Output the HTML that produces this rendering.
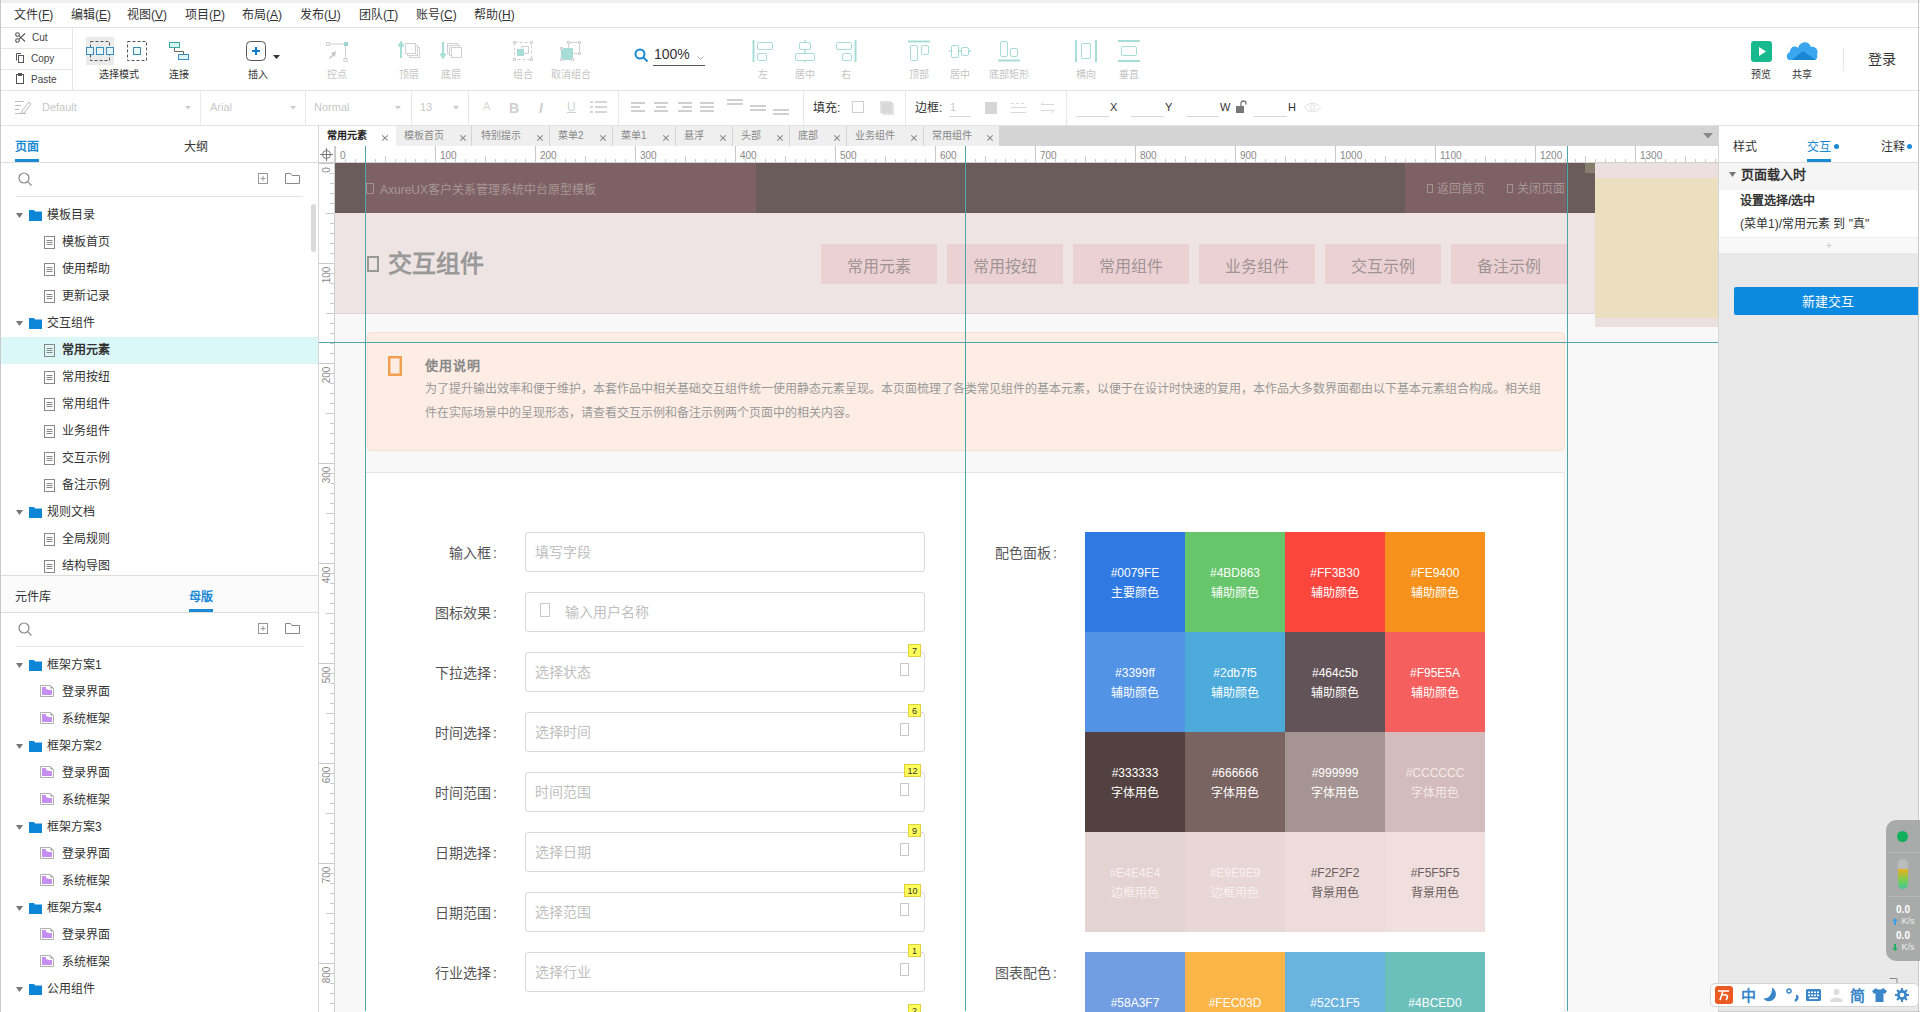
<!DOCTYPE html>
<html lang="zh-CN"><head><meta charset="utf-8"><title>Axure</title>
<style>
html,body{margin:0;padding:0;}
body{width:1920px;height:1012px;overflow:hidden;position:relative;background:#fff;font-family:"Liberation Sans",sans-serif;}
.a{position:absolute;}
.t{position:absolute;white-space:nowrap;}
svg.a{overflow:visible;}
</style></head><body>

<div class="a" style="left:0px;top:0px;width:1920px;height:3px;background:#efefef"></div>
<div class="a" style="left:0px;top:27px;width:1920px;height:1px;background:#e2e2e2"></div>
<div class="a" style="left:0px;top:90px;width:1920px;height:1px;background:#e2e2e2"></div>
<div class="a" style="left:0px;top:125px;width:1920px;height:1px;background:#e2e2e2"></div>
<div class="a" style="left:0px;top:0px;width:1px;height:1012px;background:#c9c9c9"></div>
<div class="a" style="left:1918px;top:0px;width:1px;height:1012px;background:#c9c9c9"></div>
<div class="a" style="left:0px;top:1011px;width:1920px;height:1px;background:#c9c9c9"></div>
<div class="t" style="left:14px;top:9.0px;font-size:12px;line-height:12px;color:#333;">文件(<u>F</u>)</div>
<div class="t" style="left:71px;top:9.0px;font-size:12px;line-height:12px;color:#333;">编辑(<u>E</u>)</div>
<div class="t" style="left:127px;top:9.0px;font-size:12px;line-height:12px;color:#333;">视图(<u>V</u>)</div>
<div class="t" style="left:185px;top:9.0px;font-size:12px;line-height:12px;color:#333;">项目(<u>P</u>)</div>
<div class="t" style="left:242px;top:9.0px;font-size:12px;line-height:12px;color:#333;">布局(<u>A</u>)</div>
<div class="t" style="left:300px;top:9.0px;font-size:12px;line-height:12px;color:#333;">发布(<u>U</u>)</div>
<div class="t" style="left:359px;top:9.0px;font-size:12px;line-height:12px;color:#333;">团队(<u>T</u>)</div>
<div class="t" style="left:416px;top:9.0px;font-size:12px;line-height:12px;color:#333;">账号(<u>C</u>)</div>
<div class="t" style="left:474px;top:9.0px;font-size:12px;line-height:12px;color:#333;">帮助(<u>H</u>)</div>
<div class="a" style="left:1px;top:48px;width:71px;height:1px;background:#e6e6e6"></div>
<div class="a" style="left:1px;top:69px;width:71px;height:1px;background:#e6e6e6"></div>
<div class="a" style="left:72px;top:28px;width:1px;height:62px;background:#e6e6e6"></div>
<div class="t" style="left:32px;top:32.5px;font-size:10px;line-height:10px;color:#444;">Cut</div>
<div class="t" style="left:31px;top:53.5px;font-size:10px;line-height:10px;color:#444;">Copy</div>
<div class="t" style="left:31px;top:74.5px;font-size:10px;line-height:10px;color:#444;">Paste</div>
<svg class="a" style="left:15px;top:32px;" width="11" height="11" viewBox="0 0 11 11"><g fill="none" stroke="#555" stroke-width="1.1"><circle cx="2.5" cy="2.5" r="1.8"/><circle cx="2.5" cy="8.5" r="1.8"/><path d="M4 3.8 L10 9.5 M4 7.2 L10 1.5"/></g></svg>
<svg class="a" style="left:16px;top:53px;" width="8" height="10" viewBox="0 0 8 10"><g fill="none" stroke="#555" stroke-width="1"><path d="M0.5 7.5 V0.5 H5"/><rect x="2.5" y="2.5" width="5" height="7"/></g></svg>
<svg class="a" style="left:16px;top:73px;" width="9" height="11" viewBox="0 0 9 11"><g fill="none" stroke="#555" stroke-width="1"><rect x="0.5" y="1.5" width="7" height="9"/><rect x="2.5" y="0.5" width="3" height="2" fill="#555"/></g></svg>
<div class="a" style="left:86px;top:37px;width:28px;height:28px;background:#ebebeb"></div>
<svg class="a" style="left:86px;top:37px;" width="28" height="28" viewBox="0 0 28 28"><g fill="none"><rect x="4.5" y="4.5" width="19" height="19" stroke="#555" stroke-dasharray="3 2"/><rect x="0.5" y="10.5" width="7" height="7" stroke="#3a8fc0" fill="#e2f5fa"/><rect x="10.5" y="10.5" width="7" height="7" stroke="#3a8fc0" fill="#e2f5fa"/><rect x="20.5" y="10.5" width="7" height="7" stroke="#3a8fc0" fill="#e2f5fa"/></g></svg>
<svg class="a" style="left:127px;top:41px;" width="21" height="21" viewBox="0 0 21 21"><g fill="none"><rect x="0.5" y="0.5" width="19" height="19" stroke="#555" stroke-dasharray="3 2"/><rect x="6.5" y="6.5" width="7" height="7" stroke="#3a8fb0" fill="#eef9fb"/></g></svg>
<div class="t" style="left:79.0px;top:70.0px;width:80px;text-align:center;font-size:10px;line-height:10px;color:#333;">选择模式</div>
<svg class="a" style="left:168px;top:41px;" width="22" height="20" viewBox="0 0 22 20"><g stroke-width="1"><path d="M6.5 6.5 V10.5 H15.5 V13.5" stroke="#666" fill="none"/><rect x="1.5" y="1.5" width="10" height="5" stroke="#3aa89c" fill="#d6f6f0"/><rect x="10.5" y="13.5" width="10" height="5" stroke="#3a8fc8" fill="#e0f4fb"/></g></svg>
<div class="t" style="left:139.0px;top:70.0px;width:80px;text-align:center;font-size:10px;line-height:10px;color:#333;">连接</div>
<svg class="a" style="left:246px;top:41px;" width="21" height="21" viewBox="0 0 21 21"><g fill="none"><rect x="0.5" y="0.5" width="19" height="19" rx="4" stroke="#555"/><path d="M10 6 V14 M6 10 H14" stroke="#0e7dcc" stroke-width="2"/></g></svg>
<svg class="a" style="left:273px;top:55px;" width="8" height="5" viewBox="0 0 8 5"><path d="M0 0 H7 L3.5 4 Z" fill="#333"/></svg>
<div class="t" style="left:218.0px;top:70.0px;width:80px;text-align:center;font-size:10px;line-height:10px;color:#333;">插入</div>
<svg class="a" style="left:326px;top:41px;" width="22" height="21" viewBox="0 0 22 21"><g fill="none" stroke="#d2d2d2"><path d="M3 3 H19.5 V17"/><rect x="0.5" y="1.5" width="3" height="3"/><rect x="18" y="17.5" width="3" height="3"/></g><rect x="18" y="1" width="4" height="4" fill="#9fd3d0"/><path d="M10 10 L9 16 L7.5 14.5 L4 18 L3 17 L6.5 13.5 L5 12 Z" fill="#c8c8c8"/></svg>
<div class="t" style="left:297.0px;top:70.0px;width:80px;text-align:center;font-size:10px;line-height:10px;color:#c4c4c4;">控点</div>
<svg class="a" style="left:398px;top:41px;" width="24" height="21" viewBox="0 0 24 21"><g fill="#fff" stroke="#d2d2d2"><rect x="11.5" y="6.5" width="10" height="10"/><rect x="9.5" y="4.5" width="10" height="10"/><rect x="7.5" y="2.5" width="10" height="10"/></g><path d="M3 17 V3 M0.5 5.5 L3 1.5 L5.5 5.5" fill="none" stroke="#a6ddd6" stroke-width="2"/></svg>
<div class="t" style="left:369.0px;top:70.0px;width:80px;text-align:center;font-size:10px;line-height:10px;color:#c4c4c4;">顶层</div>
<svg class="a" style="left:440px;top:41px;" width="24" height="21" viewBox="0 0 24 21"><g fill="#fff" stroke="#d2d2d2"><rect x="7.5" y="2.5" width="10" height="10"/><rect x="9.5" y="4.5" width="10" height="10"/><rect x="11.5" y="6.5" width="10" height="10"/></g><path d="M3 1 V15 M0.5 12.5 L3 16.5 L5.5 12.5" fill="none" stroke="#a6ddd6" stroke-width="2"/></svg>
<div class="t" style="left:411.0px;top:70.0px;width:80px;text-align:center;font-size:10px;line-height:10px;color:#c4c4c4;">底层</div>
<svg class="a" style="left:512px;top:41px;" width="22" height="21" viewBox="0 0 22 21"><g fill="none" stroke="#d2d2d2"><rect x="2.5" y="1.5" width="17" height="17" stroke-dasharray="3 2"/><rect x="9.5" y="5.5" width="7" height="7"/></g><g fill="#fff" stroke="#d2d2d2"><rect x="1.5" y="0.5" width="2" height="2"/><rect x="18.5" y="0.5" width="2" height="2"/><rect x="1.5" y="17.5" width="2" height="2"/><rect x="18.5" y="17.5" width="2" height="2"/></g><rect x="5" y="8" width="7" height="7" fill="#a6ddd6"/></svg>
<div class="t" style="left:483.0px;top:70.0px;width:80px;text-align:center;font-size:10px;line-height:10px;color:#c4c4c4;">组合</div>
<svg class="a" style="left:560px;top:41px;" width="22" height="21" viewBox="0 0 22 21"><rect x="8.5" y="1.5" width="11" height="11" fill="none" stroke="#d2d2d2"/><rect x="1" y="7" width="12" height="12" fill="#a6ddd6"/><g fill="#fff" stroke="#d2d2d2"><rect x="7.5" y="0.5" width="2" height="2"/><rect x="18.5" y="0.5" width="2" height="2"/><rect x="18.5" y="11.5" width="2" height="2"/><rect x="0.5" y="6.5" width="2" height="2"/><rect x="0.5" y="17.5" width="2" height="2"/><rect x="11.5" y="17.5" width="2" height="2"/></g></svg>
<div class="t" style="left:531.0px;top:70.0px;width:80px;text-align:center;font-size:10px;line-height:10px;color:#c4c4c4;">取消组合</div>
<svg class="a" style="left:634px;top:48px;" width="15" height="16" viewBox="0 0 15 16"><g fill="none" stroke="#1a8ad4" stroke-width="2"><circle cx="6" cy="6" r="4.5"/><path d="M9.5 9.5 L13.5 13.5"/></g></svg>
<div class="t" style="left:654px;top:47.0px;font-size:14px;line-height:14px;color:#333;">100%</div>
<div class="a" style="left:653px;top:65px;width:52px;height:1px;background:#555"></div>
<svg class="a" style="left:697px;top:56px;" width="7" height="5" viewBox="0 0 7 5"><path d="M0.5 0.5 L3.5 3.5 L6.5 0.5" fill="none" stroke="#aaa"/></svg>
<svg class="a" style="left:752px;top:40px;" width="22" height="22" viewBox="0 0 22 22"><g fill="none" stroke="#a8dcd7"><path d="M1.5 0 V22" stroke-width="2"/><rect rx="1.5" x="5.5" y="2.5" width="15" height="7"/><rect rx="1.5" x="5.5" y="13.5" width="9" height="7"/></g></svg>
<div class="t" style="left:723.0px;top:70.0px;width:80px;text-align:center;font-size:10px;line-height:10px;color:#c4c4c4;">左</div>
<svg class="a" style="left:794px;top:40px;" width="22" height="22" viewBox="0 0 22 22"><g fill="none" stroke="#a8dcd7"><path d="M11 0 V22" stroke-width="1.5"/><rect rx="1.5" x="5.5" y="2.5" width="11" height="7" fill="#fff"/><rect rx="1.5" x="1.5" y="13.5" width="19" height="7" fill="#fff"/></g></svg>
<div class="t" style="left:765.0px;top:70.0px;width:80px;text-align:center;font-size:10px;line-height:10px;color:#c4c4c4;">居中</div>
<svg class="a" style="left:835px;top:40px;" width="22" height="22" viewBox="0 0 22 22"><g fill="none" stroke="#a8dcd7"><path d="M20.5 0 V22" stroke-width="2"/><rect rx="1.5" x="1.5" y="2.5" width="15" height="7"/><rect rx="1.5" x="7.5" y="13.5" width="9" height="7"/></g></svg>
<div class="t" style="left:806.0px;top:70.0px;width:80px;text-align:center;font-size:10px;line-height:10px;color:#c4c4c4;">右</div>
<svg class="a" style="left:908px;top:40px;" width="22" height="22" viewBox="0 0 22 22"><g fill="none" stroke="#a8dcd7"><path d="M0 1.5 H22" stroke-width="2"/><rect rx="1.5" x="2.5" y="5.5" width="7" height="15"/><rect rx="1.5" x="13.5" y="5.5" width="7" height="9"/></g></svg>
<div class="t" style="left:879.0px;top:70.0px;width:80px;text-align:center;font-size:10px;line-height:10px;color:#c4c4c4;">顶部</div>
<svg class="a" style="left:949px;top:40px;" width="22" height="22" viewBox="0 0 22 22"><g fill="none" stroke="#a8dcd7"><path d="M0 11 H22" stroke-width="1.5"/><rect rx="1.5" x="2.5" y="5.5" width="7" height="12" fill="#fff"/><rect rx="1.5" x="12.5" y="7.5" width="7" height="8" fill="#fff"/></g></svg>
<div class="t" style="left:920.0px;top:70.0px;width:80px;text-align:center;font-size:10px;line-height:10px;color:#c4c4c4;">居中</div>
<svg class="a" style="left:998px;top:40px;" width="22" height="22" viewBox="0 0 22 22"><g fill="none" stroke="#a8dcd7"><path d="M0 20.5 H22" stroke-width="2"/><rect rx="1.5" x="2.5" y="1.5" width="7" height="15"/><rect rx="1.5" x="12.5" y="8.5" width="7" height="8"/></g></svg>
<div class="t" style="left:969.0px;top:70.0px;width:80px;text-align:center;font-size:10px;line-height:10px;color:#c4c4c4;">底部矩形</div>
<svg class="a" style="left:1075px;top:40px;" width="22" height="22" viewBox="0 0 22 22"><g fill="none" stroke="#a8dcd7"><path d="M1 0 V22 M21 0 V22" stroke-width="2"/><rect rx="1.5" x="6.5" y="3.5" width="9" height="15"/></g></svg>
<div class="t" style="left:1046.0px;top:70.0px;width:80px;text-align:center;font-size:10px;line-height:10px;color:#c4c4c4;">横向</div>
<svg class="a" style="left:1118px;top:40px;" width="22" height="22" viewBox="0 0 22 22"><g fill="none" stroke="#a8dcd7"><path d="M0 1 H22 M0 21 H22" stroke-width="2"/><rect rx="1.5" x="3.5" y="6.5" width="15" height="9"/></g></svg>
<div class="t" style="left:1089.0px;top:70.0px;width:80px;text-align:center;font-size:10px;line-height:10px;color:#c4c4c4;">垂直</div>
<svg class="a" style="left:1751px;top:41px;" width="21" height="21" viewBox="0 0 21 21"><rect x="0" y="0" width="21" height="21" rx="3" fill="#17b98f"/><path d="M8 6 L15 10.5 L8 15 Z" fill="#fff"/></svg>
<div class="t" style="left:1721.0px;top:70.0px;width:80px;text-align:center;font-size:10px;line-height:10px;color:#333;">预览</div>
<svg class="a" style="left:1786px;top:40px;" width="33" height="22" viewBox="0 0 33 22"><path d="M4 20 C0 20 -0.5 13 4 12 C4 7 9 5 12 8 C14 1 23 0 25 7 C30 6 33 11 31 15 C32 18 30 20 28 20 Z" fill="#3aa6ef"/><path d="M6 20 L17 11 L30 20 Z" fill="#1a86d6"/></svg>
<div class="t" style="left:1762.0px;top:70.0px;width:80px;text-align:center;font-size:10px;line-height:10px;color:#333;">共享</div>
<div class="a" style="left:1843px;top:48px;width:1px;height:23px;background:#e8e8e8"></div>
<div class="t" style="left:1868px;top:52.0px;font-size:14px;line-height:14px;color:#333;">登录</div>
<svg class="a" style="left:15px;top:100px;" width="17" height="15" viewBox="0 0 17 15"><g fill="none" stroke="#bbb"><path d="M0 1.5 H9 M0 5.5 H6 M0 9.5 H4 M0 13.5 H11"/><path d="M7 11 L14 2 L16 4 L9 13 L6.5 13.5 Z"/></g></svg>
<div class="t" style="left:42px;top:101.5px;font-size:11px;line-height:11px;color:#c8c8c8;">Default</div>
<svg class="a" style="left:185px;top:106px;" width="6" height="4" viewBox="0 0 6 4"><path d="M0 0 H6 L3 3.5 Z" fill="#ccc"/></svg>
<div class="a" style="left:200px;top:91px;width:1px;height:34px;background:#e8e8e8"></div>
<div class="t" style="left:210px;top:101.5px;font-size:11px;line-height:11px;color:#c8c8c8;">Arial</div>
<svg class="a" style="left:290px;top:106px;" width="6" height="4" viewBox="0 0 6 4"><path d="M0 0 H6 L3 3.5 Z" fill="#ccc"/></svg>
<div class="a" style="left:305px;top:91px;width:1px;height:34px;background:#e8e8e8"></div>
<div class="t" style="left:314px;top:101.5px;font-size:11px;line-height:11px;color:#c8c8c8;">Normal</div>
<svg class="a" style="left:395px;top:106px;" width="6" height="4" viewBox="0 0 6 4"><path d="M0 0 H6 L3 3.5 Z" fill="#ccc"/></svg>
<div class="a" style="left:411px;top:91px;width:1px;height:34px;background:#e8e8e8"></div>
<div class="t" style="left:420px;top:101.5px;font-size:11px;line-height:11px;color:#c8c8c8;">13</div>
<svg class="a" style="left:453px;top:106px;" width="6" height="4" viewBox="0 0 6 4"><path d="M0 0 H6 L3 3.5 Z" fill="#ccc"/></svg>
<div class="a" style="left:468px;top:91px;width:1px;height:34px;background:#e8e8e8"></div>
<div class="t" style="left:483px;top:100.5px;font-size:11px;line-height:11px;color:#d8d8d8;">A</div>
<div class="t" style="left:509px;top:101.0px;font-size:14px;line-height:14px;color:#d0d0d0;font-weight:bold">B</div>
<div class="t" style="left:539px;top:101.0px;font-size:14px;line-height:14px;color:#d0d0d0;font-style:italic;font-weight:bold">I</div>
<div class="t" style="left:567px;top:101.0px;font-size:12px;line-height:12px;color:#d0d0d0;text-decoration:underline">U</div>
<svg class="a" style="left:590px;top:101px;" width="18" height="13" viewBox="0 0 18 13"><g fill="#d6d6d6"><rect x="0" y="0" width="3" height="2"/><rect x="5" y="0" width="12" height="2"/><rect x="0" y="5" width="3" height="2"/><rect x="5" y="5" width="12" height="2"/><rect x="0" y="10" width="3" height="2"/><rect x="5" y="10" width="12" height="2"/></g></svg>
<div class="a" style="left:618px;top:91px;width:1px;height:34px;background:#e8e8e8"></div>
<svg class="a" style="left:631px;top:102px;" width="15" height="11" viewBox="0 0 15 11"><g fill="#d0d0d0"><rect x="0" y="0" width="14" height="2"/><rect x="0" y="4" width="9" height="2"/><rect x="0" y="8" width="14" height="2"/></g></svg>
<svg class="a" style="left:654px;top:102px;" width="15" height="11" viewBox="0 0 15 11"><g fill="#d0d0d0"><rect x="0" y="0" width="14" height="2"/><rect x="2" y="4" width="10" height="2"/><rect x="0" y="8" width="14" height="2"/></g></svg>
<svg class="a" style="left:678px;top:102px;" width="15" height="11" viewBox="0 0 15 11"><g fill="#d0d0d0"><rect x="0" y="0" width="14" height="2"/><rect x="4" y="4" width="10" height="2"/><rect x="0" y="8" width="14" height="2"/></g></svg>
<svg class="a" style="left:700px;top:102px;" width="15" height="11" viewBox="0 0 15 11"><g fill="#d0d0d0"><rect x="0" y="0" width="14" height="2"/><rect x="0" y="4" width="14" height="2"/><rect x="0" y="8" width="14" height="2"/></g></svg>
<svg class="a" style="left:727px;top:99px;" width="17" height="6" viewBox="0 0 17 6"><g fill="#d0d0d0"><rect x="0" y="0" width="16" height="2"/><rect x="0" y="4" width="16" height="2"/></g></svg>
<svg class="a" style="left:750px;top:105px;" width="17" height="6" viewBox="0 0 17 6"><g fill="#d0d0d0"><rect x="0" y="0" width="16" height="2"/><rect x="0" y="4" width="16" height="2"/></g></svg>
<svg class="a" style="left:773px;top:109px;" width="17" height="6" viewBox="0 0 17 6"><g fill="#d0d0d0"><rect x="0" y="0" width="16" height="2"/><rect x="0" y="4" width="16" height="2"/></g></svg>
<div class="a" style="left:803px;top:91px;width:1px;height:34px;background:#e8e8e8"></div>
<div class="t" style="left:813px;top:102.0px;font-size:12px;line-height:12px;color:#333;">填充:</div>
<svg class="a" style="left:852px;top:101px;" width="13" height="13" viewBox="0 0 13 13"><rect x="0.5" y="0.5" width="11" height="11" fill="#fff" stroke="#d0d0d0"/></svg>
<svg class="a" style="left:880px;top:101px;" width="14" height="14" viewBox="0 0 14 14"><rect x="0" y="0" width="12" height="12" fill="#e0e0e0"/><rect x="2" y="2" width="12" height="12" fill="#d0d0d0" opacity="0.6"/></svg>
<div class="a" style="left:905px;top:91px;width:1px;height:34px;background:#e8e8e8"></div>
<div class="t" style="left:915px;top:102.0px;font-size:12px;line-height:12px;color:#333;">边框:</div>
<div class="t" style="left:950px;top:101.5px;font-size:11px;line-height:11px;color:#c8c8c8;">1</div>
<div class="a" style="left:949px;top:116px;width:22px;height:1px;background:#d8d8d8"></div>
<div class="a" style="left:985px;top:102px;width:12px;height:12px;background:#d6d6d6"></div>
<svg class="a" style="left:1011px;top:102px;" width="16" height="12" viewBox="0 0 16 12"><g fill="#dadada"><rect x="0" y="1" width="3" height="1"/><rect x="5" y="1" width="3" height="1"/><rect x="10" y="1" width="3" height="1"/><rect x="0" y="5" width="15" height="1"/><rect x="0" y="10" width="15" height="1"/></g></svg>
<svg class="a" style="left:1040px;top:101px;" width="15" height="13" viewBox="0 0 15 13"><g fill="none" stroke="#d8d8d8"><path d="M1 3.5 H14 M1 3.5 L3.5 1 M1 9.5 H14 M14 9.5 L11.5 12"/></g></svg>
<div class="a" style="left:1066px;top:91px;width:1px;height:34px;background:#e8e8e8"></div>
<div class="a" style="left:1076px;top:116px;width:33px;height:1px;background:#d8d8d8"></div>
<div class="t" style="left:1110px;top:102.0px;font-size:11px;line-height:11px;color:#333;">X</div>
<div class="a" style="left:1131px;top:116px;width:33px;height:1px;background:#d8d8d8"></div>
<div class="t" style="left:1165px;top:102.0px;font-size:11px;line-height:11px;color:#333;">Y</div>
<div class="a" style="left:1186px;top:116px;width:33px;height:1px;background:#d8d8d8"></div>
<div class="t" style="left:1220px;top:102.0px;font-size:11px;line-height:11px;color:#333;">W</div>
<div class="a" style="left:1254px;top:116px;width:33px;height:1px;background:#d8d8d8"></div>
<div class="t" style="left:1288px;top:102.0px;font-size:11px;line-height:11px;color:#333;">H</div>
<svg class="a" style="left:1236px;top:100px;" width="11" height="14" viewBox="0 0 11 14"><path d="M5 6 V3.5 A2.5 2.5 0 0 1 10 3.5 V4.5" fill="none" stroke="#777" stroke-width="1.3"/><rect x="0" y="6" width="8" height="7" fill="#777"/></svg>
<svg class="a" style="left:1304px;top:102px;" width="17" height="11" viewBox="0 0 17 11"><g fill="none" stroke="#e0e0e0"><path d="M0.5 5.5 C4 0 13 0 16.5 5.5 C13 11 4 11 0.5 5.5 Z"/><circle cx="8.5" cy="5.5" r="2.5"/></g></svg>
<div class="a" style="left:318px;top:125px;width:1px;height:887px;background:#d6d6d6"></div>
<div class="t" style="left:15px;top:140.5px;font-size:12px;line-height:12px;color:#1a8ad4;font-weight:bold">页面</div>
<div class="t" style="left:184px;top:140.5px;font-size:12px;line-height:12px;color:#333;">大纲</div>
<div class="a" style="left:1px;top:162px;width:317px;height:1px;background:#dedede"></div>
<div class="a" style="left:15px;top:159px;width:24px;height:3px;background:#1a8ad4"></div>
<svg class="a" style="left:18px;top:172px;" width="15" height="15" viewBox="0 0 15 15"><g fill="none" stroke="#888" stroke-width="1.2"><circle cx="6" cy="6" r="5"/><path d="M9.7 9.7 L13.5 13.5"/></g></svg>
<svg class="a" style="left:257.5px;top:173px;" width="11" height="11" viewBox="0 0 11 11"><g fill="none" stroke="#999"><rect x="0.5" y="0.5" width="9" height="10"/><path d="M5 3 V8 M2.5 5.5 H7.5"/></g></svg>
<svg class="a" style="left:285px;top:173px;" width="15" height="11" viewBox="0 0 15 11"><path d="M0.5 10.5 V0.5 H5.5 L7 2.5 H14.5 V10.5 Z" fill="none" stroke="#888"/></svg>
<div class="a" style="left:16px;top:196px;width:287px;height:1px;background:#e4e4e4"></div>
<svg class="a" style="left:16px;top:212.5px;" width="7" height="5" viewBox="0 0 7 5"><path d="M0 0 H7 L3.5 5 Z" fill="#777"/></svg>
<svg class="a" style="left:29px;top:209.5px;" width="13" height="11" viewBox="0 0 13 11"><path d="M0 0 H5 L6 1.5 H13 V11 H0 Z" fill="#0d86d8"/></svg>
<div class="t" style="left:47px;top:208.5px;font-size:12px;line-height:12px;color:#333;">模板目录</div>
<svg class="a" style="left:44px;top:235.5px;" width="12" height="13" viewBox="0 0 12 13"><g fill="none" stroke="#888"><rect x="0.5" y="0.5" width="10" height="12"/><path d="M2.5 4.5 H8.5 M2.5 6.5 H8.5 M2.5 8.5 H8.5"/></g></svg>
<div class="t" style="left:62px;top:235.5px;font-size:12px;line-height:12px;color:#333;">模板首页</div>
<svg class="a" style="left:44px;top:262.5px;" width="12" height="13" viewBox="0 0 12 13"><g fill="none" stroke="#888"><rect x="0.5" y="0.5" width="10" height="12"/><path d="M2.5 4.5 H8.5 M2.5 6.5 H8.5 M2.5 8.5 H8.5"/></g></svg>
<div class="t" style="left:62px;top:262.5px;font-size:12px;line-height:12px;color:#333;">使用帮助</div>
<svg class="a" style="left:44px;top:289.5px;" width="12" height="13" viewBox="0 0 12 13"><g fill="none" stroke="#888"><rect x="0.5" y="0.5" width="10" height="12"/><path d="M2.5 4.5 H8.5 M2.5 6.5 H8.5 M2.5 8.5 H8.5"/></g></svg>
<div class="t" style="left:62px;top:289.5px;font-size:12px;line-height:12px;color:#333;">更新记录</div>
<svg class="a" style="left:16px;top:320.5px;" width="7" height="5" viewBox="0 0 7 5"><path d="M0 0 H7 L3.5 5 Z" fill="#777"/></svg>
<svg class="a" style="left:29px;top:317.5px;" width="13" height="11" viewBox="0 0 13 11"><path d="M0 0 H5 L6 1.5 H13 V11 H0 Z" fill="#0d86d8"/></svg>
<div class="t" style="left:47px;top:316.5px;font-size:12px;line-height:12px;color:#333;">交互组件</div>
<div class="a" style="left:1px;top:336.5px;width:317px;height:27px;background:#dcf7f8"></div>
<svg class="a" style="left:44px;top:343.5px;" width="12" height="13" viewBox="0 0 12 13"><g fill="none" stroke="#888"><rect x="0.5" y="0.5" width="10" height="12"/><path d="M2.5 4.5 H8.5 M2.5 6.5 H8.5 M2.5 8.5 H8.5"/></g></svg>
<div class="t" style="left:62px;top:343.5px;font-size:12px;line-height:12px;color:#333;font-weight:bold">常用元素</div>
<svg class="a" style="left:44px;top:370.5px;" width="12" height="13" viewBox="0 0 12 13"><g fill="none" stroke="#888"><rect x="0.5" y="0.5" width="10" height="12"/><path d="M2.5 4.5 H8.5 M2.5 6.5 H8.5 M2.5 8.5 H8.5"/></g></svg>
<div class="t" style="left:62px;top:370.5px;font-size:12px;line-height:12px;color:#333;">常用按纽</div>
<svg class="a" style="left:44px;top:397.5px;" width="12" height="13" viewBox="0 0 12 13"><g fill="none" stroke="#888"><rect x="0.5" y="0.5" width="10" height="12"/><path d="M2.5 4.5 H8.5 M2.5 6.5 H8.5 M2.5 8.5 H8.5"/></g></svg>
<div class="t" style="left:62px;top:397.5px;font-size:12px;line-height:12px;color:#333;">常用组件</div>
<svg class="a" style="left:44px;top:424.5px;" width="12" height="13" viewBox="0 0 12 13"><g fill="none" stroke="#888"><rect x="0.5" y="0.5" width="10" height="12"/><path d="M2.5 4.5 H8.5 M2.5 6.5 H8.5 M2.5 8.5 H8.5"/></g></svg>
<div class="t" style="left:62px;top:424.5px;font-size:12px;line-height:12px;color:#333;">业务组件</div>
<svg class="a" style="left:44px;top:451.5px;" width="12" height="13" viewBox="0 0 12 13"><g fill="none" stroke="#888"><rect x="0.5" y="0.5" width="10" height="12"/><path d="M2.5 4.5 H8.5 M2.5 6.5 H8.5 M2.5 8.5 H8.5"/></g></svg>
<div class="t" style="left:62px;top:451.5px;font-size:12px;line-height:12px;color:#333;">交互示例</div>
<svg class="a" style="left:44px;top:478.5px;" width="12" height="13" viewBox="0 0 12 13"><g fill="none" stroke="#888"><rect x="0.5" y="0.5" width="10" height="12"/><path d="M2.5 4.5 H8.5 M2.5 6.5 H8.5 M2.5 8.5 H8.5"/></g></svg>
<div class="t" style="left:62px;top:478.5px;font-size:12px;line-height:12px;color:#333;">备注示例</div>
<svg class="a" style="left:16px;top:509.5px;" width="7" height="5" viewBox="0 0 7 5"><path d="M0 0 H7 L3.5 5 Z" fill="#777"/></svg>
<svg class="a" style="left:29px;top:506.5px;" width="13" height="11" viewBox="0 0 13 11"><path d="M0 0 H5 L6 1.5 H13 V11 H0 Z" fill="#0d86d8"/></svg>
<div class="t" style="left:47px;top:505.5px;font-size:12px;line-height:12px;color:#333;">规则文档</div>
<svg class="a" style="left:44px;top:532.5px;" width="12" height="13" viewBox="0 0 12 13"><g fill="none" stroke="#888"><rect x="0.5" y="0.5" width="10" height="12"/><path d="M2.5 4.5 H8.5 M2.5 6.5 H8.5 M2.5 8.5 H8.5"/></g></svg>
<div class="t" style="left:62px;top:532.5px;font-size:12px;line-height:12px;color:#333;">全局规则</div>
<svg class="a" style="left:44px;top:559.5px;" width="12" height="13" viewBox="0 0 12 13"><g fill="none" stroke="#888"><rect x="0.5" y="0.5" width="10" height="12"/><path d="M2.5 4.5 H8.5 M2.5 6.5 H8.5 M2.5 8.5 H8.5"/></g></svg>
<div class="t" style="left:62px;top:559.5px;font-size:12px;line-height:12px;color:#333;">结构导图</div>
<div class="a" style="left:311px;top:204px;width:5px;height:48px;background:#d9d9d9;border-radius:3px"></div>
<div class="a" style="left:1px;top:576px;width:317px;height:436px;background:#fff"></div>
<div class="a" style="left:1px;top:576px;width:317px;height:36px;background:#fbfbfb"></div>
<div class="a" style="left:1px;top:575px;width:317px;height:1px;background:#dcdcdc"></div>
<div class="t" style="left:15px;top:590.5px;font-size:12px;line-height:12px;color:#333;">元件库</div>
<div class="t" style="left:189px;top:590.5px;font-size:12px;line-height:12px;color:#1a8ad4;font-weight:bold">母版</div>
<div class="a" style="left:1px;top:612px;width:317px;height:1px;background:#dedede"></div>
<div class="a" style="left:189px;top:609px;width:24px;height:3px;background:#1a8ad4"></div>
<svg class="a" style="left:18px;top:622px;" width="15" height="15" viewBox="0 0 15 15"><g fill="none" stroke="#888" stroke-width="1.2"><circle cx="6" cy="6" r="5"/><path d="M9.7 9.7 L13.5 13.5"/></g></svg>
<svg class="a" style="left:257.5px;top:623px;" width="11" height="11" viewBox="0 0 11 11"><g fill="none" stroke="#999"><rect x="0.5" y="0.5" width="9" height="10"/><path d="M5 3 V8 M2.5 5.5 H7.5"/></g></svg>
<svg class="a" style="left:285px;top:623px;" width="15" height="11" viewBox="0 0 15 11"><path d="M0.5 10.5 V0.5 H5.5 L7 2.5 H14.5 V10.5 Z" fill="none" stroke="#888"/></svg>
<div class="a" style="left:16px;top:646px;width:287px;height:1px;background:#e4e4e4"></div>
<svg class="a" style="left:16px;top:662.5px;" width="7" height="5" viewBox="0 0 7 5"><path d="M0 0 H7 L3.5 5 Z" fill="#777"/></svg>
<svg class="a" style="left:29px;top:659.5px;" width="13" height="11" viewBox="0 0 13 11"><path d="M0 0 H5 L6 1.5 H13 V11 H0 Z" fill="#0d86d8"/></svg>
<div class="t" style="left:47px;top:658.5px;font-size:12px;line-height:12px;color:#333;">框架方案1</div>
<svg class="a" style="left:40px;top:685.0px;" width="14" height="13" viewBox="0 0 14 13"><path d="M0.5 0.5 H10.5 L13.5 3.5 V11.5 H0.5 Z" fill="#fff" stroke="#b0b0b0"/><path d="M10.5 0.5 V3.5 H13.5 Z" fill="#a0a0a0"/><path d="M2 2 H6 V4 L9 5 H12 V10 H2 Z" fill="#c58ef0"/></svg>
<div class="t" style="left:62px;top:685.5px;font-size:12px;line-height:12px;color:#333;">登录界面</div>
<svg class="a" style="left:40px;top:712.0px;" width="14" height="13" viewBox="0 0 14 13"><path d="M0.5 0.5 H10.5 L13.5 3.5 V11.5 H0.5 Z" fill="#fff" stroke="#b0b0b0"/><path d="M10.5 0.5 V3.5 H13.5 Z" fill="#a0a0a0"/><path d="M2 2 H6 V4 L9 5 H12 V10 H2 Z" fill="#c58ef0"/></svg>
<div class="t" style="left:62px;top:712.5px;font-size:12px;line-height:12px;color:#333;">系统框架</div>
<svg class="a" style="left:16px;top:743.5px;" width="7" height="5" viewBox="0 0 7 5"><path d="M0 0 H7 L3.5 5 Z" fill="#777"/></svg>
<svg class="a" style="left:29px;top:740.5px;" width="13" height="11" viewBox="0 0 13 11"><path d="M0 0 H5 L6 1.5 H13 V11 H0 Z" fill="#0d86d8"/></svg>
<div class="t" style="left:47px;top:739.5px;font-size:12px;line-height:12px;color:#333;">框架方案2</div>
<svg class="a" style="left:40px;top:766.0px;" width="14" height="13" viewBox="0 0 14 13"><path d="M0.5 0.5 H10.5 L13.5 3.5 V11.5 H0.5 Z" fill="#fff" stroke="#b0b0b0"/><path d="M10.5 0.5 V3.5 H13.5 Z" fill="#a0a0a0"/><path d="M2 2 H6 V4 L9 5 H12 V10 H2 Z" fill="#c58ef0"/></svg>
<div class="t" style="left:62px;top:766.5px;font-size:12px;line-height:12px;color:#333;">登录界面</div>
<svg class="a" style="left:40px;top:793.0px;" width="14" height="13" viewBox="0 0 14 13"><path d="M0.5 0.5 H10.5 L13.5 3.5 V11.5 H0.5 Z" fill="#fff" stroke="#b0b0b0"/><path d="M10.5 0.5 V3.5 H13.5 Z" fill="#a0a0a0"/><path d="M2 2 H6 V4 L9 5 H12 V10 H2 Z" fill="#c58ef0"/></svg>
<div class="t" style="left:62px;top:793.5px;font-size:12px;line-height:12px;color:#333;">系统框架</div>
<svg class="a" style="left:16px;top:824.5px;" width="7" height="5" viewBox="0 0 7 5"><path d="M0 0 H7 L3.5 5 Z" fill="#777"/></svg>
<svg class="a" style="left:29px;top:821.5px;" width="13" height="11" viewBox="0 0 13 11"><path d="M0 0 H5 L6 1.5 H13 V11 H0 Z" fill="#0d86d8"/></svg>
<div class="t" style="left:47px;top:820.5px;font-size:12px;line-height:12px;color:#333;">框架方案3</div>
<svg class="a" style="left:40px;top:847.0px;" width="14" height="13" viewBox="0 0 14 13"><path d="M0.5 0.5 H10.5 L13.5 3.5 V11.5 H0.5 Z" fill="#fff" stroke="#b0b0b0"/><path d="M10.5 0.5 V3.5 H13.5 Z" fill="#a0a0a0"/><path d="M2 2 H6 V4 L9 5 H12 V10 H2 Z" fill="#c58ef0"/></svg>
<div class="t" style="left:62px;top:847.5px;font-size:12px;line-height:12px;color:#333;">登录界面</div>
<svg class="a" style="left:40px;top:874.0px;" width="14" height="13" viewBox="0 0 14 13"><path d="M0.5 0.5 H10.5 L13.5 3.5 V11.5 H0.5 Z" fill="#fff" stroke="#b0b0b0"/><path d="M10.5 0.5 V3.5 H13.5 Z" fill="#a0a0a0"/><path d="M2 2 H6 V4 L9 5 H12 V10 H2 Z" fill="#c58ef0"/></svg>
<div class="t" style="left:62px;top:874.5px;font-size:12px;line-height:12px;color:#333;">系统框架</div>
<svg class="a" style="left:16px;top:905.5px;" width="7" height="5" viewBox="0 0 7 5"><path d="M0 0 H7 L3.5 5 Z" fill="#777"/></svg>
<svg class="a" style="left:29px;top:902.5px;" width="13" height="11" viewBox="0 0 13 11"><path d="M0 0 H5 L6 1.5 H13 V11 H0 Z" fill="#0d86d8"/></svg>
<div class="t" style="left:47px;top:901.5px;font-size:12px;line-height:12px;color:#333;">框架方案4</div>
<svg class="a" style="left:40px;top:928.0px;" width="14" height="13" viewBox="0 0 14 13"><path d="M0.5 0.5 H10.5 L13.5 3.5 V11.5 H0.5 Z" fill="#fff" stroke="#b0b0b0"/><path d="M10.5 0.5 V3.5 H13.5 Z" fill="#a0a0a0"/><path d="M2 2 H6 V4 L9 5 H12 V10 H2 Z" fill="#c58ef0"/></svg>
<div class="t" style="left:62px;top:928.5px;font-size:12px;line-height:12px;color:#333;">登录界面</div>
<svg class="a" style="left:40px;top:955.0px;" width="14" height="13" viewBox="0 0 14 13"><path d="M0.5 0.5 H10.5 L13.5 3.5 V11.5 H0.5 Z" fill="#fff" stroke="#b0b0b0"/><path d="M10.5 0.5 V3.5 H13.5 Z" fill="#a0a0a0"/><path d="M2 2 H6 V4 L9 5 H12 V10 H2 Z" fill="#c58ef0"/></svg>
<div class="t" style="left:62px;top:955.5px;font-size:12px;line-height:12px;color:#333;">系统框架</div>
<svg class="a" style="left:16px;top:986.5px;" width="7" height="5" viewBox="0 0 7 5"><path d="M0 0 H7 L3.5 5 Z" fill="#777"/></svg>
<svg class="a" style="left:29px;top:983.5px;" width="13" height="11" viewBox="0 0 13 11"><path d="M0 0 H5 L6 1.5 H13 V11 H0 Z" fill="#0d86d8"/></svg>
<div class="t" style="left:47px;top:982.5px;font-size:12px;line-height:12px;color:#333;">公用组件</div>
<div class="a" style="left:319px;top:126px;width:1399px;height:20px;background:#d4d4d4"></div>
<div class="a" style="left:319px;top:126px;width:77px;height:20px;background:#fff"></div>
<div class="t" style="left:327px;top:130.5px;font-size:10px;line-height:10px;color:#222;font-weight:bold">常用元素</div>
<svg class="a" style="left:381.5px;top:134.5px;" width="6" height="6" viewBox="0 0 6 6"><path d="M0.3 0.3 L5.7 5.7 M5.7 0.3 L0.3 5.7" stroke="#8a8a8a" stroke-width="1.1"/></svg>
<div class="a" style="left:396px;top:126px;width:75px;height:20px;background:#efefef"></div>
<div class="t" style="left:404px;top:130.5px;font-size:10px;line-height:10px;color:#888;">模板首页</div>
<svg class="a" style="left:459.5px;top:134.5px;" width="6" height="6" viewBox="0 0 6 6"><path d="M0.3 0.3 L5.7 5.7 M5.7 0.3 L0.3 5.7" stroke="#8a8a8a" stroke-width="1.1"/></svg>
<div class="a" style="left:472px;top:126px;width:77px;height:20px;background:#efefef"></div>
<div class="t" style="left:481px;top:130.5px;font-size:10px;line-height:10px;color:#888;">特别提示</div>
<svg class="a" style="left:536.5px;top:134.5px;" width="6" height="6" viewBox="0 0 6 6"><path d="M0.3 0.3 L5.7 5.7 M5.7 0.3 L0.3 5.7" stroke="#8a8a8a" stroke-width="1.1"/></svg>
<div class="a" style="left:550px;top:126px;width:62px;height:20px;background:#efefef"></div>
<div class="t" style="left:558px;top:130.5px;font-size:10px;line-height:10px;color:#888;">菜单2</div>
<svg class="a" style="left:599.5px;top:134.5px;" width="6" height="6" viewBox="0 0 6 6"><path d="M0.3 0.3 L5.7 5.7 M5.7 0.3 L0.3 5.7" stroke="#8a8a8a" stroke-width="1.1"/></svg>
<div class="a" style="left:613px;top:126px;width:62px;height:20px;background:#efefef"></div>
<div class="t" style="left:621px;top:130.5px;font-size:10px;line-height:10px;color:#888;">菜单1</div>
<svg class="a" style="left:662.5px;top:134.5px;" width="6" height="6" viewBox="0 0 6 6"><path d="M0.3 0.3 L5.7 5.7 M5.7 0.3 L0.3 5.7" stroke="#8a8a8a" stroke-width="1.1"/></svg>
<div class="a" style="left:676px;top:126px;width:56px;height:20px;background:#efefef"></div>
<div class="t" style="left:684px;top:130.5px;font-size:10px;line-height:10px;color:#888;">悬浮</div>
<svg class="a" style="left:719.5px;top:134.5px;" width="6" height="6" viewBox="0 0 6 6"><path d="M0.3 0.3 L5.7 5.7 M5.7 0.3 L0.3 5.7" stroke="#8a8a8a" stroke-width="1.1"/></svg>
<div class="a" style="left:733px;top:126px;width:56px;height:20px;background:#efefef"></div>
<div class="t" style="left:741px;top:130.5px;font-size:10px;line-height:10px;color:#888;">头部</div>
<svg class="a" style="left:776.5px;top:134.5px;" width="6" height="6" viewBox="0 0 6 6"><path d="M0.3 0.3 L5.7 5.7 M5.7 0.3 L0.3 5.7" stroke="#8a8a8a" stroke-width="1.1"/></svg>
<div class="a" style="left:790px;top:126px;width:56px;height:20px;background:#efefef"></div>
<div class="t" style="left:798px;top:130.5px;font-size:10px;line-height:10px;color:#888;">底部</div>
<svg class="a" style="left:833.5px;top:134.5px;" width="6" height="6" viewBox="0 0 6 6"><path d="M0.3 0.3 L5.7 5.7 M5.7 0.3 L0.3 5.7" stroke="#8a8a8a" stroke-width="1.1"/></svg>
<div class="a" style="left:847px;top:126px;width:76px;height:20px;background:#efefef"></div>
<div class="t" style="left:855px;top:130.5px;font-size:10px;line-height:10px;color:#888;">业务组件</div>
<svg class="a" style="left:910.5px;top:134.5px;" width="6" height="6" viewBox="0 0 6 6"><path d="M0.3 0.3 L5.7 5.7 M5.7 0.3 L0.3 5.7" stroke="#8a8a8a" stroke-width="1.1"/></svg>
<div class="a" style="left:924px;top:126px;width:75px;height:20px;background:#efefef"></div>
<div class="t" style="left:932px;top:130.5px;font-size:10px;line-height:10px;color:#888;">常用组件</div>
<svg class="a" style="left:986.5px;top:134.5px;" width="6" height="6" viewBox="0 0 6 6"><path d="M0.3 0.3 L5.7 5.7 M5.7 0.3 L0.3 5.7" stroke="#8a8a8a" stroke-width="1.1"/></svg>
<svg class="a" style="left:1703px;top:133px;" width="10" height="6" viewBox="0 0 10 6"><path d="M0 0 H10 L5 5.5 Z" fill="#888"/></svg>
<div class="a" style="left:319px;top:146px;width:1399px;height:17px;background:#fff"></div>
<div class="a" style="left:319px;top:162px;width:1399px;height:1px;background:#cfcfcf"></div>
<div class="a" style="left:334px;top:146px;width:1px;height:866px;background:#cfcfcf"></div>
<div class="a" style="left:319px;top:163px;width:15px;height:849px;background:#fff"></div>
<svg class="a" style="left:320px;top:148px;" width="13" height="13" viewBox="0 0 13 13"><g fill="none" stroke="#777"><circle cx="6.5" cy="6.5" r="4"/><path d="M6.5 0 V13 M0 6.5 H13"/></g></svg>
<svg class="a" style="left:319px;top:146px;" width="1399" height="16" viewBox="0 0 1399 16"><rect x="16" y="0" width="1" height="16" fill="#c8c8c8"/><rect x="26" y="13" width="1" height="3" fill="#c8c8c8"/><rect x="36" y="13" width="1" height="3" fill="#c8c8c8"/><rect x="46" y="13" width="1" height="3" fill="#c8c8c8"/><rect x="56" y="13" width="1" height="3" fill="#c8c8c8"/><rect x="66" y="10" width="1" height="6" fill="#c8c8c8"/><rect x="76" y="13" width="1" height="3" fill="#c8c8c8"/><rect x="86" y="13" width="1" height="3" fill="#c8c8c8"/><rect x="96" y="13" width="1" height="3" fill="#c8c8c8"/><rect x="106" y="13" width="1" height="3" fill="#c8c8c8"/><rect x="116" y="0" width="1" height="16" fill="#c8c8c8"/><rect x="126" y="13" width="1" height="3" fill="#c8c8c8"/><rect x="136" y="13" width="1" height="3" fill="#c8c8c8"/><rect x="146" y="13" width="1" height="3" fill="#c8c8c8"/><rect x="156" y="13" width="1" height="3" fill="#c8c8c8"/><rect x="166" y="10" width="1" height="6" fill="#c8c8c8"/><rect x="176" y="13" width="1" height="3" fill="#c8c8c8"/><rect x="186" y="13" width="1" height="3" fill="#c8c8c8"/><rect x="196" y="13" width="1" height="3" fill="#c8c8c8"/><rect x="206" y="13" width="1" height="3" fill="#c8c8c8"/><rect x="216" y="0" width="1" height="16" fill="#c8c8c8"/><rect x="226" y="13" width="1" height="3" fill="#c8c8c8"/><rect x="236" y="13" width="1" height="3" fill="#c8c8c8"/><rect x="246" y="13" width="1" height="3" fill="#c8c8c8"/><rect x="256" y="13" width="1" height="3" fill="#c8c8c8"/><rect x="266" y="10" width="1" height="6" fill="#c8c8c8"/><rect x="276" y="13" width="1" height="3" fill="#c8c8c8"/><rect x="286" y="13" width="1" height="3" fill="#c8c8c8"/><rect x="296" y="13" width="1" height="3" fill="#c8c8c8"/><rect x="306" y="13" width="1" height="3" fill="#c8c8c8"/><rect x="316" y="0" width="1" height="16" fill="#c8c8c8"/><rect x="326" y="13" width="1" height="3" fill="#c8c8c8"/><rect x="336" y="13" width="1" height="3" fill="#c8c8c8"/><rect x="346" y="13" width="1" height="3" fill="#c8c8c8"/><rect x="356" y="13" width="1" height="3" fill="#c8c8c8"/><rect x="366" y="10" width="1" height="6" fill="#c8c8c8"/><rect x="376" y="13" width="1" height="3" fill="#c8c8c8"/><rect x="386" y="13" width="1" height="3" fill="#c8c8c8"/><rect x="396" y="13" width="1" height="3" fill="#c8c8c8"/><rect x="406" y="13" width="1" height="3" fill="#c8c8c8"/><rect x="416" y="0" width="1" height="16" fill="#c8c8c8"/><rect x="426" y="13" width="1" height="3" fill="#c8c8c8"/><rect x="436" y="13" width="1" height="3" fill="#c8c8c8"/><rect x="446" y="13" width="1" height="3" fill="#c8c8c8"/><rect x="456" y="13" width="1" height="3" fill="#c8c8c8"/><rect x="466" y="10" width="1" height="6" fill="#c8c8c8"/><rect x="476" y="13" width="1" height="3" fill="#c8c8c8"/><rect x="486" y="13" width="1" height="3" fill="#c8c8c8"/><rect x="496" y="13" width="1" height="3" fill="#c8c8c8"/><rect x="506" y="13" width="1" height="3" fill="#c8c8c8"/><rect x="516" y="0" width="1" height="16" fill="#c8c8c8"/><rect x="526" y="13" width="1" height="3" fill="#c8c8c8"/><rect x="536" y="13" width="1" height="3" fill="#c8c8c8"/><rect x="546" y="13" width="1" height="3" fill="#c8c8c8"/><rect x="556" y="13" width="1" height="3" fill="#c8c8c8"/><rect x="566" y="10" width="1" height="6" fill="#c8c8c8"/><rect x="576" y="13" width="1" height="3" fill="#c8c8c8"/><rect x="586" y="13" width="1" height="3" fill="#c8c8c8"/><rect x="596" y="13" width="1" height="3" fill="#c8c8c8"/><rect x="606" y="13" width="1" height="3" fill="#c8c8c8"/><rect x="616" y="0" width="1" height="16" fill="#c8c8c8"/><rect x="626" y="13" width="1" height="3" fill="#c8c8c8"/><rect x="636" y="13" width="1" height="3" fill="#c8c8c8"/><rect x="646" y="13" width="1" height="3" fill="#c8c8c8"/><rect x="656" y="13" width="1" height="3" fill="#c8c8c8"/><rect x="666" y="10" width="1" height="6" fill="#c8c8c8"/><rect x="676" y="13" width="1" height="3" fill="#c8c8c8"/><rect x="686" y="13" width="1" height="3" fill="#c8c8c8"/><rect x="696" y="13" width="1" height="3" fill="#c8c8c8"/><rect x="706" y="13" width="1" height="3" fill="#c8c8c8"/><rect x="716" y="0" width="1" height="16" fill="#c8c8c8"/><rect x="726" y="13" width="1" height="3" fill="#c8c8c8"/><rect x="736" y="13" width="1" height="3" fill="#c8c8c8"/><rect x="746" y="13" width="1" height="3" fill="#c8c8c8"/><rect x="756" y="13" width="1" height="3" fill="#c8c8c8"/><rect x="766" y="10" width="1" height="6" fill="#c8c8c8"/><rect x="776" y="13" width="1" height="3" fill="#c8c8c8"/><rect x="786" y="13" width="1" height="3" fill="#c8c8c8"/><rect x="796" y="13" width="1" height="3" fill="#c8c8c8"/><rect x="806" y="13" width="1" height="3" fill="#c8c8c8"/><rect x="816" y="0" width="1" height="16" fill="#c8c8c8"/><rect x="826" y="13" width="1" height="3" fill="#c8c8c8"/><rect x="836" y="13" width="1" height="3" fill="#c8c8c8"/><rect x="846" y="13" width="1" height="3" fill="#c8c8c8"/><rect x="856" y="13" width="1" height="3" fill="#c8c8c8"/><rect x="866" y="10" width="1" height="6" fill="#c8c8c8"/><rect x="876" y="13" width="1" height="3" fill="#c8c8c8"/><rect x="886" y="13" width="1" height="3" fill="#c8c8c8"/><rect x="896" y="13" width="1" height="3" fill="#c8c8c8"/><rect x="906" y="13" width="1" height="3" fill="#c8c8c8"/><rect x="916" y="0" width="1" height="16" fill="#c8c8c8"/><rect x="926" y="13" width="1" height="3" fill="#c8c8c8"/><rect x="936" y="13" width="1" height="3" fill="#c8c8c8"/><rect x="946" y="13" width="1" height="3" fill="#c8c8c8"/><rect x="956" y="13" width="1" height="3" fill="#c8c8c8"/><rect x="966" y="10" width="1" height="6" fill="#c8c8c8"/><rect x="976" y="13" width="1" height="3" fill="#c8c8c8"/><rect x="986" y="13" width="1" height="3" fill="#c8c8c8"/><rect x="996" y="13" width="1" height="3" fill="#c8c8c8"/><rect x="1006" y="13" width="1" height="3" fill="#c8c8c8"/><rect x="1016" y="0" width="1" height="16" fill="#c8c8c8"/><rect x="1026" y="13" width="1" height="3" fill="#c8c8c8"/><rect x="1036" y="13" width="1" height="3" fill="#c8c8c8"/><rect x="1046" y="13" width="1" height="3" fill="#c8c8c8"/><rect x="1056" y="13" width="1" height="3" fill="#c8c8c8"/><rect x="1066" y="10" width="1" height="6" fill="#c8c8c8"/><rect x="1076" y="13" width="1" height="3" fill="#c8c8c8"/><rect x="1086" y="13" width="1" height="3" fill="#c8c8c8"/><rect x="1096" y="13" width="1" height="3" fill="#c8c8c8"/><rect x="1106" y="13" width="1" height="3" fill="#c8c8c8"/><rect x="1116" y="0" width="1" height="16" fill="#c8c8c8"/><rect x="1126" y="13" width="1" height="3" fill="#c8c8c8"/><rect x="1136" y="13" width="1" height="3" fill="#c8c8c8"/><rect x="1146" y="13" width="1" height="3" fill="#c8c8c8"/><rect x="1156" y="13" width="1" height="3" fill="#c8c8c8"/><rect x="1166" y="10" width="1" height="6" fill="#c8c8c8"/><rect x="1176" y="13" width="1" height="3" fill="#c8c8c8"/><rect x="1186" y="13" width="1" height="3" fill="#c8c8c8"/><rect x="1196" y="13" width="1" height="3" fill="#c8c8c8"/><rect x="1206" y="13" width="1" height="3" fill="#c8c8c8"/><rect x="1216" y="0" width="1" height="16" fill="#c8c8c8"/><rect x="1226" y="13" width="1" height="3" fill="#c8c8c8"/><rect x="1236" y="13" width="1" height="3" fill="#c8c8c8"/><rect x="1246" y="13" width="1" height="3" fill="#c8c8c8"/><rect x="1256" y="13" width="1" height="3" fill="#c8c8c8"/><rect x="1266" y="10" width="1" height="6" fill="#c8c8c8"/><rect x="1276" y="13" width="1" height="3" fill="#c8c8c8"/><rect x="1286" y="13" width="1" height="3" fill="#c8c8c8"/><rect x="1296" y="13" width="1" height="3" fill="#c8c8c8"/><rect x="1306" y="13" width="1" height="3" fill="#c8c8c8"/><rect x="1316" y="0" width="1" height="16" fill="#c8c8c8"/><rect x="1326" y="13" width="1" height="3" fill="#c8c8c8"/><rect x="1336" y="13" width="1" height="3" fill="#c8c8c8"/><rect x="1346" y="13" width="1" height="3" fill="#c8c8c8"/><rect x="1356" y="13" width="1" height="3" fill="#c8c8c8"/><rect x="1366" y="10" width="1" height="6" fill="#c8c8c8"/><rect x="1376" y="13" width="1" height="3" fill="#c8c8c8"/><rect x="1386" y="13" width="1" height="3" fill="#c8c8c8"/><rect x="1396" y="13" width="1" height="3" fill="#c8c8c8"/></svg>
<div class="t" style="left:340px;top:150.5px;font-size:10px;line-height:10px;color:#888;">0</div>
<div class="t" style="left:440px;top:150.5px;font-size:10px;line-height:10px;color:#888;">100</div>
<div class="t" style="left:540px;top:150.5px;font-size:10px;line-height:10px;color:#888;">200</div>
<div class="t" style="left:640px;top:150.5px;font-size:10px;line-height:10px;color:#888;">300</div>
<div class="t" style="left:740px;top:150.5px;font-size:10px;line-height:10px;color:#888;">400</div>
<div class="t" style="left:840px;top:150.5px;font-size:10px;line-height:10px;color:#888;">500</div>
<div class="t" style="left:940px;top:150.5px;font-size:10px;line-height:10px;color:#888;">600</div>
<div class="t" style="left:1040px;top:150.5px;font-size:10px;line-height:10px;color:#888;">700</div>
<div class="t" style="left:1140px;top:150.5px;font-size:10px;line-height:10px;color:#888;">800</div>
<div class="t" style="left:1240px;top:150.5px;font-size:10px;line-height:10px;color:#888;">900</div>
<div class="t" style="left:1340px;top:150.5px;font-size:10px;line-height:10px;color:#888;">1000</div>
<div class="t" style="left:1440px;top:150.5px;font-size:10px;line-height:10px;color:#888;">1100</div>
<div class="t" style="left:1540px;top:150.5px;font-size:10px;line-height:10px;color:#888;">1200</div>
<div class="t" style="left:1640px;top:150.5px;font-size:10px;line-height:10px;color:#888;">1300</div>
<svg class="a" style="left:319px;top:163px;" width="15" height="849" viewBox="0 0 15 849"><rect x="0" y="0" width="15" height="1" fill="#c8c8c8"/><rect x="11" y="10" width="4" height="1" fill="#c8c8c8"/><rect x="11" y="20" width="4" height="1" fill="#c8c8c8"/><rect x="11" y="30" width="4" height="1" fill="#c8c8c8"/><rect x="11" y="40" width="4" height="1" fill="#c8c8c8"/><rect x="7" y="50" width="8" height="1" fill="#c8c8c8"/><rect x="11" y="60" width="4" height="1" fill="#c8c8c8"/><rect x="11" y="70" width="4" height="1" fill="#c8c8c8"/><rect x="11" y="80" width="4" height="1" fill="#c8c8c8"/><rect x="11" y="90" width="4" height="1" fill="#c8c8c8"/><rect x="0" y="100" width="15" height="1" fill="#c8c8c8"/><rect x="11" y="110" width="4" height="1" fill="#c8c8c8"/><rect x="11" y="120" width="4" height="1" fill="#c8c8c8"/><rect x="11" y="130" width="4" height="1" fill="#c8c8c8"/><rect x="11" y="140" width="4" height="1" fill="#c8c8c8"/><rect x="7" y="150" width="8" height="1" fill="#c8c8c8"/><rect x="11" y="160" width="4" height="1" fill="#c8c8c8"/><rect x="11" y="170" width="4" height="1" fill="#c8c8c8"/><rect x="11" y="180" width="4" height="1" fill="#c8c8c8"/><rect x="11" y="190" width="4" height="1" fill="#c8c8c8"/><rect x="0" y="200" width="15" height="1" fill="#c8c8c8"/><rect x="11" y="210" width="4" height="1" fill="#c8c8c8"/><rect x="11" y="220" width="4" height="1" fill="#c8c8c8"/><rect x="11" y="230" width="4" height="1" fill="#c8c8c8"/><rect x="11" y="240" width="4" height="1" fill="#c8c8c8"/><rect x="7" y="250" width="8" height="1" fill="#c8c8c8"/><rect x="11" y="260" width="4" height="1" fill="#c8c8c8"/><rect x="11" y="270" width="4" height="1" fill="#c8c8c8"/><rect x="11" y="280" width="4" height="1" fill="#c8c8c8"/><rect x="11" y="290" width="4" height="1" fill="#c8c8c8"/><rect x="0" y="300" width="15" height="1" fill="#c8c8c8"/><rect x="11" y="310" width="4" height="1" fill="#c8c8c8"/><rect x="11" y="320" width="4" height="1" fill="#c8c8c8"/><rect x="11" y="330" width="4" height="1" fill="#c8c8c8"/><rect x="11" y="340" width="4" height="1" fill="#c8c8c8"/><rect x="7" y="350" width="8" height="1" fill="#c8c8c8"/><rect x="11" y="360" width="4" height="1" fill="#c8c8c8"/><rect x="11" y="370" width="4" height="1" fill="#c8c8c8"/><rect x="11" y="380" width="4" height="1" fill="#c8c8c8"/><rect x="11" y="390" width="4" height="1" fill="#c8c8c8"/><rect x="0" y="400" width="15" height="1" fill="#c8c8c8"/><rect x="11" y="410" width="4" height="1" fill="#c8c8c8"/><rect x="11" y="420" width="4" height="1" fill="#c8c8c8"/><rect x="11" y="430" width="4" height="1" fill="#c8c8c8"/><rect x="11" y="440" width="4" height="1" fill="#c8c8c8"/><rect x="7" y="450" width="8" height="1" fill="#c8c8c8"/><rect x="11" y="460" width="4" height="1" fill="#c8c8c8"/><rect x="11" y="470" width="4" height="1" fill="#c8c8c8"/><rect x="11" y="480" width="4" height="1" fill="#c8c8c8"/><rect x="11" y="490" width="4" height="1" fill="#c8c8c8"/><rect x="0" y="500" width="15" height="1" fill="#c8c8c8"/><rect x="11" y="510" width="4" height="1" fill="#c8c8c8"/><rect x="11" y="520" width="4" height="1" fill="#c8c8c8"/><rect x="11" y="530" width="4" height="1" fill="#c8c8c8"/><rect x="11" y="540" width="4" height="1" fill="#c8c8c8"/><rect x="7" y="550" width="8" height="1" fill="#c8c8c8"/><rect x="11" y="560" width="4" height="1" fill="#c8c8c8"/><rect x="11" y="570" width="4" height="1" fill="#c8c8c8"/><rect x="11" y="580" width="4" height="1" fill="#c8c8c8"/><rect x="11" y="590" width="4" height="1" fill="#c8c8c8"/><rect x="0" y="600" width="15" height="1" fill="#c8c8c8"/><rect x="11" y="610" width="4" height="1" fill="#c8c8c8"/><rect x="11" y="620" width="4" height="1" fill="#c8c8c8"/><rect x="11" y="630" width="4" height="1" fill="#c8c8c8"/><rect x="11" y="640" width="4" height="1" fill="#c8c8c8"/><rect x="7" y="650" width="8" height="1" fill="#c8c8c8"/><rect x="11" y="660" width="4" height="1" fill="#c8c8c8"/><rect x="11" y="670" width="4" height="1" fill="#c8c8c8"/><rect x="11" y="680" width="4" height="1" fill="#c8c8c8"/><rect x="11" y="690" width="4" height="1" fill="#c8c8c8"/><rect x="0" y="700" width="15" height="1" fill="#c8c8c8"/><rect x="11" y="710" width="4" height="1" fill="#c8c8c8"/><rect x="11" y="720" width="4" height="1" fill="#c8c8c8"/><rect x="11" y="730" width="4" height="1" fill="#c8c8c8"/><rect x="11" y="740" width="4" height="1" fill="#c8c8c8"/><rect x="7" y="750" width="8" height="1" fill="#c8c8c8"/><rect x="11" y="760" width="4" height="1" fill="#c8c8c8"/><rect x="11" y="770" width="4" height="1" fill="#c8c8c8"/><rect x="11" y="780" width="4" height="1" fill="#c8c8c8"/><rect x="11" y="790" width="4" height="1" fill="#c8c8c8"/><rect x="0" y="800" width="15" height="1" fill="#c8c8c8"/><rect x="11" y="810" width="4" height="1" fill="#c8c8c8"/><rect x="11" y="820" width="4" height="1" fill="#c8c8c8"/><rect x="11" y="830" width="4" height="1" fill="#c8c8c8"/><rect x="11" y="840" width="4" height="1" fill="#c8c8c8"/></svg>
<div class="t" style="left:306.5px;top:164.75px;width:40px;height:10px;font-size:10px;line-height:10px;color:#888;transform-origin:20px 5px;transform:rotate(-90deg);text-align:center">0</div>
<div class="t" style="left:306.5px;top:270.25px;width:40px;height:10px;font-size:10px;line-height:10px;color:#888;transform-origin:20px 5px;transform:rotate(-90deg);text-align:center">100</div>
<div class="t" style="left:306.5px;top:370.25px;width:40px;height:10px;font-size:10px;line-height:10px;color:#888;transform-origin:20px 5px;transform:rotate(-90deg);text-align:center">200</div>
<div class="t" style="left:306.5px;top:470.25px;width:40px;height:10px;font-size:10px;line-height:10px;color:#888;transform-origin:20px 5px;transform:rotate(-90deg);text-align:center">300</div>
<div class="t" style="left:306.5px;top:570.25px;width:40px;height:10px;font-size:10px;line-height:10px;color:#888;transform-origin:20px 5px;transform:rotate(-90deg);text-align:center">400</div>
<div class="t" style="left:306.5px;top:670.25px;width:40px;height:10px;font-size:10px;line-height:10px;color:#888;transform-origin:20px 5px;transform:rotate(-90deg);text-align:center">500</div>
<div class="t" style="left:306.5px;top:770.25px;width:40px;height:10px;font-size:10px;line-height:10px;color:#888;transform-origin:20px 5px;transform:rotate(-90deg);text-align:center">600</div>
<div class="t" style="left:306.5px;top:870.25px;width:40px;height:10px;font-size:10px;line-height:10px;color:#888;transform-origin:20px 5px;transform:rotate(-90deg);text-align:center">700</div>
<div class="t" style="left:306.5px;top:970.25px;width:40px;height:10px;font-size:10px;line-height:10px;color:#888;transform-origin:20px 5px;transform:rotate(-90deg);text-align:center">800</div>
<div class="a" style="left:335px;top:163px;width:1383px;height:849px;background:#f8f8f8"></div>
<div class="a" style="left:335px;top:163px;width:1260px;height:50px;background:#695c5b"></div>
<div class="a" style="left:366px;top:163px;width:390px;height:50px;background:#7e6164"></div>
<div class="a" style="left:1405px;top:163px;width:161px;height:50px;background:#7e6164"></div>
<div class="a" style="left:1585px;top:163px;width:10px;height:10px;background:#887e6e"></div>
<div class="a" style="left:1595px;top:163px;width:123px;height:164px;background:#ebdfdf"></div>
<div class="a" style="left:1595px;top:178px;width:123px;height:140px;background:#ebdfc0"></div>
<svg class="a" style="left:366px;top:183px;" width="9" height="12" viewBox="0 0 9 12"><rect x="0.5" y="0.5" width="7" height="10" fill="none" stroke="#a39090"/></svg>
<div class="t" style="left:380px;top:183.5px;font-size:12px;line-height:12px;color:#a89797;">AxureUX客户关系管理系统中台原型模板</div>
<svg class="a" style="left:1427px;top:184px;" width="6" height="9" viewBox="0 0 6 9"><rect x="0.5" y="0.5" width="5" height="8" fill="none" stroke="#a39090"/></svg>
<div class="t" style="left:1437px;top:182.5px;font-size:12px;line-height:12px;color:#a89797;">返回首页</div>
<svg class="a" style="left:1507px;top:184px;" width="6" height="9" viewBox="0 0 6 9"><rect x="0.5" y="0.5" width="5" height="8" fill="none" stroke="#a39090"/></svg>
<div class="t" style="left:1517px;top:182.5px;font-size:12px;line-height:12px;color:#a89797;">关闭页面</div>
<div class="a" style="left:335px;top:213px;width:1260px;height:100px;background:#eee4e3"></div>
<div class="a" style="left:335px;top:313px;width:1260px;height:1px;background:#e0d6d6"></div>
<svg class="a" style="left:367px;top:256px;" width="12" height="16" viewBox="0 0 12 16"><rect x="1" y="1" width="10" height="14" fill="none" stroke="#999" stroke-width="2"/></svg>
<div class="t" style="left:388px;top:252.0px;font-size:24px;line-height:24px;color:#999;font-weight:bold">交互组件</div>
<div class="a" style="left:821px;top:244px;width:116px;height:40px;background:#ecd1d4"></div>
<div class="t" style="left:821.0px;top:258.5px;width:116px;text-align:center;font-size:16px;line-height:16px;color:#a09595;">常用元素</div>
<div class="a" style="left:947px;top:244px;width:116px;height:40px;background:#ecd1d4"></div>
<div class="t" style="left:947.0px;top:258.5px;width:116px;text-align:center;font-size:16px;line-height:16px;color:#a09595;">常用按纽</div>
<div class="a" style="left:1073px;top:244px;width:116px;height:40px;background:#ecd1d4"></div>
<div class="t" style="left:1073.0px;top:258.5px;width:116px;text-align:center;font-size:16px;line-height:16px;color:#a09595;">常用组件</div>
<div class="a" style="left:1199px;top:244px;width:116px;height:40px;background:#ecd1d4"></div>
<div class="t" style="left:1199.0px;top:258.5px;width:116px;text-align:center;font-size:16px;line-height:16px;color:#a09595;">业务组件</div>
<div class="a" style="left:1325px;top:244px;width:116px;height:40px;background:#ecd1d4"></div>
<div class="t" style="left:1325.0px;top:258.5px;width:116px;text-align:center;font-size:16px;line-height:16px;color:#a09595;">交互示例</div>
<div class="a" style="left:1451px;top:244px;width:116px;height:40px;background:#ecd1d4"></div>
<div class="t" style="left:1451.0px;top:258.5px;width:116px;text-align:center;font-size:16px;line-height:16px;color:#a09595;">备注示例</div>
<div class="a" style="left:367px;top:332px;width:1198px;height:119px;background:#fdede5;border:1px solid #f7e0d5;border-radius:4px;box-sizing:border-box"></div>
<svg class="a" style="left:388px;top:356px;" width="14" height="20" viewBox="0 0 14 20"><rect x="1.25" y="1.25" width="11.5" height="17.5" fill="none" stroke="#f0a050" stroke-width="2.5"/></svg>
<div class="t" style="left:425px;top:358.5px;font-size:13px;line-height:13px;color:#888;font-weight:bold;letter-spacing:1px">使用说明</div>
<div class="t" style="left:425px;top:382.5px;font-size:12px;line-height:12px;color:#999;">为了提升输出效率和便于维护，本套作品中相关基础交互组件统一使用静态元素呈现。本页面梳理了各类常见组件的基本元素，以便于在设计时快速的复用，本作品大多数界面都由以下基本元素组合构成。相关组</div>
<div class="t" style="left:425px;top:406.5px;font-size:12px;line-height:12px;color:#999;">件在实际场景中的呈现形态，请查看交互示例和备注示例两个页面中的相关内容。</div>
<div class="a" style="left:366px;top:472px;width:1199px;height:540px;background:#fff;border-top:1px solid #e6e6e6;border-right:1px solid #eeeeee;box-sizing:border-box"></div>
<div class="t" style="left:377px;top:546.0px;width:120px;text-align:right;font-size:14px;line-height:14px;color:#555;">输入框<span style="margin-left:2px">:</span></div>
<div class="a" style="left:525px;top:532px;width:400px;height:40px;background:#fff;border:1px solid #d9d9d9;border-radius:3px;box-sizing:border-box"></div>
<div class="t" style="left:535px;top:545.0px;font-size:14px;line-height:14px;color:#c0c0c0;">填写字段</div>
<div class="t" style="left:377px;top:606.0px;width:120px;text-align:right;font-size:14px;line-height:14px;color:#555;">图标效果<span style="margin-left:2px">:</span></div>
<div class="a" style="left:525px;top:592px;width:400px;height:40px;background:#fff;border:1px solid #d9d9d9;border-radius:3px;box-sizing:border-box"></div>
<svg class="a" style="left:540px;top:603px;" width="11" height="15" viewBox="0 0 11 15"><rect x="0.5" y="0.5" width="9" height="13" fill="none" stroke="#c8c8c8"/></svg>
<div class="t" style="left:565px;top:605.0px;font-size:14px;line-height:14px;color:#c0c0c0;">输入用户名称</div>
<div class="t" style="left:377px;top:666.0px;width:120px;text-align:right;font-size:14px;line-height:14px;color:#555;">下拉选择<span style="margin-left:2px">:</span></div>
<div class="a" style="left:525px;top:652px;width:400px;height:40px;background:#fff;border:1px solid #d9d9d9;border-radius:3px;box-sizing:border-box"></div>
<div class="t" style="left:535px;top:665.0px;font-size:14px;line-height:14px;color:#c0c0c0;">选择状态</div>
<svg class="a" style="left:900px;top:663px;" width="10" height="14" viewBox="0 0 10 14"><rect x="0.5" y="0.5" width="8" height="12" fill="none" stroke="#c8c8c8"/></svg>
<div class="t" style="left:908px;top:644px;width:13px;height:13px;background:#ffff5a;border:1px solid #e0d040;box-sizing:border-box;font-size:9px;line-height:12px;text-align:center;color:#333">7</div>
<div class="t" style="left:377px;top:726.0px;width:120px;text-align:right;font-size:14px;line-height:14px;color:#555;">时间选择<span style="margin-left:2px">:</span></div>
<div class="a" style="left:525px;top:712px;width:400px;height:40px;background:#fff;border:1px solid #d9d9d9;border-radius:3px;box-sizing:border-box"></div>
<div class="t" style="left:535px;top:725.0px;font-size:14px;line-height:14px;color:#c0c0c0;">选择时间</div>
<svg class="a" style="left:900px;top:723px;" width="10" height="14" viewBox="0 0 10 14"><rect x="0.5" y="0.5" width="8" height="12" fill="none" stroke="#c8c8c8"/></svg>
<div class="t" style="left:908px;top:704px;width:13px;height:13px;background:#ffff5a;border:1px solid #e0d040;box-sizing:border-box;font-size:9px;line-height:12px;text-align:center;color:#333">6</div>
<div class="t" style="left:377px;top:786.0px;width:120px;text-align:right;font-size:14px;line-height:14px;color:#555;">时间范围<span style="margin-left:2px">:</span></div>
<div class="a" style="left:525px;top:772px;width:400px;height:40px;background:#fff;border:1px solid #d9d9d9;border-radius:3px;box-sizing:border-box"></div>
<div class="t" style="left:535px;top:785.0px;font-size:14px;line-height:14px;color:#c0c0c0;">时间范围</div>
<svg class="a" style="left:900px;top:783px;" width="10" height="14" viewBox="0 0 10 14"><rect x="0.5" y="0.5" width="8" height="12" fill="none" stroke="#c8c8c8"/></svg>
<div class="t" style="left:904px;top:764px;width:17px;height:13px;background:#ffff5a;border:1px solid #e0d040;box-sizing:border-box;font-size:9px;line-height:12px;text-align:center;color:#333">12</div>
<div class="t" style="left:377px;top:846.0px;width:120px;text-align:right;font-size:14px;line-height:14px;color:#555;">日期选择<span style="margin-left:2px">:</span></div>
<div class="a" style="left:525px;top:832px;width:400px;height:40px;background:#fff;border:1px solid #d9d9d9;border-radius:3px;box-sizing:border-box"></div>
<div class="t" style="left:535px;top:845.0px;font-size:14px;line-height:14px;color:#c0c0c0;">选择日期</div>
<svg class="a" style="left:900px;top:843px;" width="10" height="14" viewBox="0 0 10 14"><rect x="0.5" y="0.5" width="8" height="12" fill="none" stroke="#c8c8c8"/></svg>
<div class="t" style="left:908px;top:824px;width:13px;height:13px;background:#ffff5a;border:1px solid #e0d040;box-sizing:border-box;font-size:9px;line-height:12px;text-align:center;color:#333">9</div>
<div class="t" style="left:377px;top:906.0px;width:120px;text-align:right;font-size:14px;line-height:14px;color:#555;">日期范围<span style="margin-left:2px">:</span></div>
<div class="a" style="left:525px;top:892px;width:400px;height:40px;background:#fff;border:1px solid #d9d9d9;border-radius:3px;box-sizing:border-box"></div>
<div class="t" style="left:535px;top:905.0px;font-size:14px;line-height:14px;color:#c0c0c0;">选择范围</div>
<svg class="a" style="left:900px;top:903px;" width="10" height="14" viewBox="0 0 10 14"><rect x="0.5" y="0.5" width="8" height="12" fill="none" stroke="#c8c8c8"/></svg>
<div class="t" style="left:904px;top:884px;width:17px;height:13px;background:#ffff5a;border:1px solid #e0d040;box-sizing:border-box;font-size:9px;line-height:12px;text-align:center;color:#333">10</div>
<div class="t" style="left:377px;top:966.0px;width:120px;text-align:right;font-size:14px;line-height:14px;color:#555;">行业选择<span style="margin-left:2px">:</span></div>
<div class="a" style="left:525px;top:952px;width:400px;height:40px;background:#fff;border:1px solid #d9d9d9;border-radius:3px;box-sizing:border-box"></div>
<div class="t" style="left:535px;top:965.0px;font-size:14px;line-height:14px;color:#c0c0c0;">选择行业</div>
<svg class="a" style="left:900px;top:963px;" width="10" height="14" viewBox="0 0 10 14"><rect x="0.5" y="0.5" width="8" height="12" fill="none" stroke="#c8c8c8"/></svg>
<div class="t" style="left:908px;top:944px;width:13px;height:13px;background:#ffff5a;border:1px solid #e0d040;box-sizing:border-box;font-size:9px;line-height:12px;text-align:center;color:#333">1</div>
<div class="a" style="left:525px;top:1012px;width:400px;height:40px;background:#fff;border:1px solid #d9d9d9;border-radius:3px;box-sizing:border-box"></div>
<svg class="a" style="left:900px;top:1023px;" width="10" height="14" viewBox="0 0 10 14"><rect x="0.5" y="0.5" width="8" height="12" fill="none" stroke="#c8c8c8"/></svg>
<div class="t" style="left:908px;top:1004px;width:13px;height:13px;background:#ffff5a;border:1px solid #e0d040;box-sizing:border-box;font-size:9px;line-height:12px;text-align:center;color:#333">2</div>
<div class="t" style="left:995px;top:546.0px;font-size:14px;line-height:14px;color:#5a5a5a;">配色面板<span style="margin-left:2px">:</span></div>
<div class="t" style="left:995px;top:966.0px;font-size:14px;line-height:14px;color:#5a5a5a;">图表配色<span style="margin-left:2px">:</span></div>
<div class="a" style="left:1085px;top:532px;width:100px;height:100px;background:#2e7ae2"></div>
<div class="t" style="left:1085.0px;top:566.5px;width:100px;text-align:center;font-size:12px;line-height:12px;color:#fff;">#0079FE</div>
<div class="t" style="left:1085.0px;top:586.5px;width:100px;text-align:center;font-size:12px;line-height:12px;color:#fff;">主要颜色</div>
<div class="a" style="left:1185px;top:532px;width:100px;height:100px;background:#67c66b"></div>
<div class="t" style="left:1185.0px;top:566.5px;width:100px;text-align:center;font-size:12px;line-height:12px;color:#fff;">#4BD863</div>
<div class="t" style="left:1185.0px;top:586.5px;width:100px;text-align:center;font-size:12px;line-height:12px;color:#fff;">辅助颜色</div>
<div class="a" style="left:1285px;top:532px;width:100px;height:100px;background:#fb463e"></div>
<div class="t" style="left:1285.0px;top:566.5px;width:100px;text-align:center;font-size:12px;line-height:12px;color:#fff;">#FF3B30</div>
<div class="t" style="left:1285.0px;top:586.5px;width:100px;text-align:center;font-size:12px;line-height:12px;color:#fff;">辅助颜色</div>
<div class="a" style="left:1385px;top:532px;width:100px;height:100px;background:#f6921b"></div>
<div class="t" style="left:1385.0px;top:566.5px;width:100px;text-align:center;font-size:12px;line-height:12px;color:#fff;">#FE9400</div>
<div class="t" style="left:1385.0px;top:586.5px;width:100px;text-align:center;font-size:12px;line-height:12px;color:#fff;">辅助颜色</div>
<div class="a" style="left:1085px;top:632px;width:100px;height:100px;background:#5393e5"></div>
<div class="t" style="left:1085.0px;top:666.5px;width:100px;text-align:center;font-size:12px;line-height:12px;color:#fff;">#3399ff</div>
<div class="t" style="left:1085.0px;top:686.5px;width:100px;text-align:center;font-size:12px;line-height:12px;color:#fff;">辅助颜色</div>
<div class="a" style="left:1185px;top:632px;width:100px;height:100px;background:#4cabdb"></div>
<div class="t" style="left:1185.0px;top:666.5px;width:100px;text-align:center;font-size:12px;line-height:12px;color:#fff;">#2db7f5</div>
<div class="t" style="left:1185.0px;top:686.5px;width:100px;text-align:center;font-size:12px;line-height:12px;color:#fff;">辅助颜色</div>
<div class="a" style="left:1285px;top:632px;width:100px;height:100px;background:#625358"></div>
<div class="t" style="left:1285.0px;top:666.5px;width:100px;text-align:center;font-size:12px;line-height:12px;color:#fff;">#464c5b</div>
<div class="t" style="left:1285.0px;top:686.5px;width:100px;text-align:center;font-size:12px;line-height:12px;color:#fff;">辅助颜色</div>
<div class="a" style="left:1385px;top:632px;width:100px;height:100px;background:#f55f5e"></div>
<div class="t" style="left:1385.0px;top:666.5px;width:100px;text-align:center;font-size:12px;line-height:12px;color:#fff;">#F95E5A</div>
<div class="t" style="left:1385.0px;top:686.5px;width:100px;text-align:center;font-size:12px;line-height:12px;color:#fff;">辅助颜色</div>
<div class="a" style="left:1085px;top:732px;width:100px;height:100px;background:#524140"></div>
<div class="t" style="left:1085.0px;top:766.5px;width:100px;text-align:center;font-size:12px;line-height:12px;color:#fff;">#333333</div>
<div class="t" style="left:1085.0px;top:786.5px;width:100px;text-align:center;font-size:12px;line-height:12px;color:#fff;">字体用色</div>
<div class="a" style="left:1185px;top:732px;width:100px;height:100px;background:#7a6462"></div>
<div class="t" style="left:1185.0px;top:766.5px;width:100px;text-align:center;font-size:12px;line-height:12px;color:#fff;">#666666</div>
<div class="t" style="left:1185.0px;top:786.5px;width:100px;text-align:center;font-size:12px;line-height:12px;color:#fff;">字体用色</div>
<div class="a" style="left:1285px;top:732px;width:100px;height:100px;background:#a69492"></div>
<div class="t" style="left:1285.0px;top:766.5px;width:100px;text-align:center;font-size:12px;line-height:12px;color:#fff;">#999999</div>
<div class="t" style="left:1285.0px;top:786.5px;width:100px;text-align:center;font-size:12px;line-height:12px;color:#fff;">字体用色</div>
<div class="a" style="left:1385px;top:732px;width:100px;height:100px;background:#d3bcbb"></div>
<div class="t" style="left:1385.0px;top:766.5px;width:100px;text-align:center;font-size:12px;line-height:12px;color:#f4eaea;">#CCCCCC</div>
<div class="t" style="left:1385.0px;top:786.5px;width:100px;text-align:center;font-size:12px;line-height:12px;color:#f4eaea;">字体用色</div>
<div class="a" style="left:1085px;top:832px;width:100px;height:100px;background:#e4d3d3"></div>
<div class="t" style="left:1085.0px;top:866.5px;width:100px;text-align:center;font-size:12px;line-height:12px;color:#f8f0f0;">#E4E4E4</div>
<div class="t" style="left:1085.0px;top:886.5px;width:100px;text-align:center;font-size:12px;line-height:12px;color:#f8f0f0;">边框用色</div>
<div class="a" style="left:1185px;top:832px;width:100px;height:100px;background:#e8d7d6"></div>
<div class="t" style="left:1185.0px;top:866.5px;width:100px;text-align:center;font-size:12px;line-height:12px;color:#f8f0f0;">#E9E9E9</div>
<div class="t" style="left:1185.0px;top:886.5px;width:100px;text-align:center;font-size:12px;line-height:12px;color:#f8f0f0;">边框用色</div>
<div class="a" style="left:1285px;top:832px;width:100px;height:100px;background:#eddcdb"></div>
<div class="t" style="left:1285.0px;top:866.5px;width:100px;text-align:center;font-size:12px;line-height:12px;color:#6a6060;">#F2F2F2</div>
<div class="t" style="left:1285.0px;top:886.5px;width:100px;text-align:center;font-size:12px;line-height:12px;color:#6a6060;">背景用色</div>
<div class="a" style="left:1385px;top:832px;width:100px;height:100px;background:#f0dfde"></div>
<div class="t" style="left:1385.0px;top:866.5px;width:100px;text-align:center;font-size:12px;line-height:12px;color:#6a6060;">#F5F5F5</div>
<div class="t" style="left:1385.0px;top:886.5px;width:100px;text-align:center;font-size:12px;line-height:12px;color:#6a6060;">背景用色</div>
<div class="a" style="left:1085px;top:952px;width:100px;height:60px;background:#739de2"></div>
<div class="t" style="left:1085.0px;top:996.5px;width:100px;text-align:center;font-size:12px;line-height:12px;color:#fff;">#58A3F7</div>
<div class="a" style="left:1185px;top:952px;width:100px;height:60px;background:#fbb548"></div>
<div class="t" style="left:1185.0px;top:996.5px;width:100px;text-align:center;font-size:12px;line-height:12px;color:#fff;">#FEC03D</div>
<div class="a" style="left:1285px;top:952px;width:100px;height:60px;background:#6bb3df"></div>
<div class="t" style="left:1285.0px;top:996.5px;width:100px;text-align:center;font-size:12px;line-height:12px;color:#fff;">#52C1F5</div>
<div class="a" style="left:1385px;top:952px;width:100px;height:60px;background:#6cc0bb"></div>
<div class="t" style="left:1385.0px;top:996.5px;width:100px;text-align:center;font-size:12px;line-height:12px;color:#fff;">#4BCED0</div>
<div class="a" style="left:365px;top:146px;width:1px;height:865px;background:#4fa6a8"></div>
<div class="a" style="left:965px;top:146px;width:1px;height:865px;background:#4fa6a8"></div>
<div class="a" style="left:1567px;top:146px;width:1px;height:865px;background:#4fa6a8"></div>
<div class="a" style="left:319px;top:342px;width:1399px;height:1px;background:#4fa6a8"></div>
<div class="a" style="left:1719px;top:126px;width:199px;height:885px;background:#e9e9e9"></div>
<div class="a" style="left:1718px;top:125px;width:1px;height:886px;background:#d6d6d6"></div>
<div class="a" style="left:1719px;top:126px;width:199px;height:36px;background:#fff"></div>
<div class="t" style="left:1733px;top:140.5px;font-size:12px;line-height:12px;color:#333;">样式</div>
<div class="t" style="left:1807px;top:140.5px;font-size:12px;line-height:12px;color:#1a8ad4;">交互</div>
<div class="a" style="left:1834px;top:144px;width:5px;height:5px;background:#1a8ad4;border-radius:50%"></div>
<div class="t" style="left:1881px;top:140.5px;font-size:12px;line-height:12px;color:#333;">注释</div>
<div class="a" style="left:1907px;top:144px;width:5px;height:5px;background:#1a8ad4;border-radius:50%"></div>
<div class="a" style="left:1807px;top:159px;width:24px;height:3px;background:#1a8ad4"></div>
<div class="a" style="left:1719px;top:162px;width:199px;height:1px;background:#dedede"></div>
<div class="a" style="left:1719px;top:163px;width:199px;height:27px;background:#f5f5f5"></div>
<svg class="a" style="left:1729px;top:172px;" width="7" height="5" viewBox="0 0 7 5"><path d="M0 0 H7 L3.5 5 Z" fill="#777"/></svg>
<div class="t" style="left:1741px;top:168.0px;font-size:13px;line-height:13px;color:#333;font-weight:bold">页面载入时</div>
<div class="a" style="left:1719px;top:190px;width:199px;height:47px;background:#fff"></div>
<div class="t" style="left:1740px;top:194.5px;font-size:12px;line-height:12px;color:#333;font-weight:bold">设置选择/选中</div>
<div class="t" style="left:1740px;top:217.5px;font-size:12px;line-height:12px;color:#333;">(菜单1)/常用元素 到 "真"</div>
<div class="a" style="left:1719px;top:237px;width:199px;height:16px;background:#f8f8f8;border-top:1px solid #eee;box-sizing:border-box"></div>
<div class="t" style="left:1819.0px;top:240.5px;width:20px;text-align:center;font-size:10px;line-height:10px;color:#ccc;">+</div>
<div class="a" style="left:1734px;top:287px;width:184px;height:28px;background:#0b8ae0;border-radius:2px 0 0 2px"></div>
<div class="t" style="left:1768.0px;top:294.5px;width:120px;text-align:center;font-size:13px;line-height:13px;color:#fff;">新建交互</div>
<div class="a" style="left:1886px;top:820px;width:34px;height:141px;background:#a9abab;border-radius:10px 0 0 10px"></div>
<div class="a" style="left:1897px;top:831px;width:11px;height:11px;background:#12b05a;border-radius:50%"></div>
<div class="a" style="left:1888px;top:852px;width:32px;height:1px;background:#b4b6b6"></div>
<div class="a" style="left:1888px;top:896px;width:32px;height:1px;background:#b4b6b6"></div>
<div class="a" style="left:1898px;top:859px;width:10px;height:30px;background:linear-gradient(#bbbdbd 0,#bbbdbd 33%,#e8b020 34%,#7ccf50 70%,#3dc89a 100%);border-radius:5px"></div>
<div class="t" style="left:1893.0px;top:905.0px;width:20px;text-align:center;font-size:10px;line-height:10px;color:#fff;font-weight:bold">0.0</div>
<div class="t" style="left:1898.0px;top:916.5px;width:20px;text-align:center;font-size:9px;line-height:9px;color:#eee;">K/s</div>
<svg class="a" style="left:1892px;top:918px;" width="6" height="7" viewBox="0 0 6 7"><path d="M3 0 L6 3 H4 V7 H2 V3 H0 Z" fill="#3aa0e8"/></svg>
<div class="t" style="left:1893.0px;top:931.0px;width:20px;text-align:center;font-size:10px;line-height:10px;color:#fff;font-weight:bold">0.0</div>
<div class="t" style="left:1898.0px;top:942.5px;width:20px;text-align:center;font-size:9px;line-height:9px;color:#eee;">K/s</div>
<svg class="a" style="left:1892px;top:944px;" width="6" height="7" viewBox="0 0 6 7"><path d="M3 7 L6 4 H4 V0 H2 V4 H0 Z" fill="#20b060"/></svg>
<svg class="a" style="left:1889px;top:978px;" width="9" height="6" viewBox="0 0 9 6"><path d="M0.5 0.5 H8 V5" fill="none" stroke="#888"/></svg>
<div class="a" style="left:1710px;top:983px;width:209px;height:24px;background:#fff;border:1px solid #d4d4d4;border-radius:5px;box-sizing:border-box"></div>
<svg class="a" style="left:1715px;top:986px;" width="18" height="18" viewBox="0 0 18 18"><rect width="18" height="18" rx="3" fill="#ec5a24"/><path d="M3 5 H14 M8 5 L5 14 M7 9 C12 8 14 10 11 14" fill="none" stroke="#fff" stroke-width="1.6"/></svg>
<div class="t" style="left:1741px;top:987.5px;font-size:15px;line-height:15px;color:#3a86c8;font-weight:bold">中</div>
<svg class="a" style="left:1763px;top:987px;" width="14" height="15" viewBox="0 0 14 15"><path d="M9 0.5 C14 3 14.5 11 9 13.5 C6 15 2 14 0.5 11.5 C5 12 9.5 8 9 0.5 Z" fill="#3a86c8"/></svg>
<svg class="a" style="left:1786px;top:988px;" width="13" height="14" viewBox="0 0 13 14"><circle cx="3" cy="3" r="2" fill="none" stroke="#3a86c8" stroke-width="1.5"/><path d="M10 8 C12 8 12 11 9 13" stroke="#3a86c8" stroke-width="2.5" fill="none"/></svg>
<svg class="a" style="left:1806px;top:989px;" width="16" height="12" viewBox="0 0 16 12"><rect x="0" y="0" width="15" height="12" rx="1.5" fill="#3a86c8"/><g fill="#fff"><rect x="2" y="2.5" width="2" height="1.6"/><rect x="5" y="2.5" width="2" height="1.6"/><rect x="8" y="2.5" width="2" height="1.6"/><rect x="11" y="2.5" width="2" height="1.6"/><rect x="2" y="5.5" width="2" height="1.6"/><rect x="5" y="5.5" width="2" height="1.6"/><rect x="8" y="5.5" width="2" height="1.6"/><rect x="11" y="5.5" width="2" height="1.6"/><rect x="3" y="8.5" width="9" height="1.6"/></g></svg>
<svg class="a" style="left:1830px;top:988px;" width="13" height="14" viewBox="0 0 13 14"><circle cx="6.5" cy="4" r="3" fill="#ddd"/><path d="M0 14 C0 8 13 8 13 14 Z" fill="#ddd"/></svg>
<div class="t" style="left:1850px;top:987.5px;font-size:15px;line-height:15px;color:#3a86c8;font-weight:bold">简</div>
<svg class="a" style="left:1872px;top:988px;" width="15" height="14" viewBox="0 0 15 14"><path d="M4 0 L0 3 L2 6 L3.5 5 V14 H11.5 V5 L13 6 L15 3 L11 0 C10 2 5 2 4 0 Z" fill="#3a86c8"/></svg>
<svg class="a" style="left:1895px;top:988px;" width="14" height="14" viewBox="0 0 14 14"><g fill="#3a86c8"><circle cx="7" cy="7" r="5"/><rect x="6" y="0" width="2" height="14"/><rect x="0" y="6" width="14" height="2"/><rect x="6" y="0" width="2" height="14" transform="rotate(45 7 7)"/><rect x="6" y="0" width="2" height="14" transform="rotate(-45 7 7)"/></g><circle cx="7" cy="7" r="2.3" fill="#fff"/></svg>
</body></html>
